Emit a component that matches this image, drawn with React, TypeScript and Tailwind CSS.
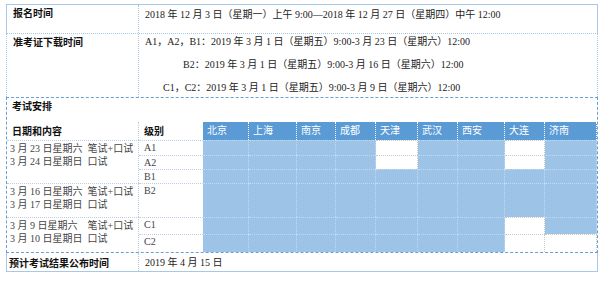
const cities = ['北京', '上海', '南京', '成都', '天津', '武汉', '西安', '大连', '济南'];

const levels = [
  { name: 'A1', row: 'row-start-2', white: [4, 7] },
  { name: 'A2', row: 'row-start-3', white: [4, 7] },
  { name: 'B1', row: 'row-start-4', white: [] as number[] },
  { name: 'B2', row: 'row-start-5', white: [] as number[] },
  { name: 'C1', row: 'row-start-6', white: [7] },
  { name: 'C2', row: 'row-start-7', white: [7, 8] },
];

const cityCols = [
  'col-start-3',
  'col-start-4',
  'col-start-5',
  'col-start-6',
  'col-start-7',
  'col-start-8',
  'col-start-9',
  'col-start-10',
  'col-start-11',
];

const dates = [
  { rows: 'row-start-2 row-span-3', lines: ['3 月 23 日星期六  笔试+口试', '3 月 24 日星期日  口试'] },
  { rows: 'row-start-5 row-span-1', lines: ['3 月 16 日星期六  笔试+口试', '3 月 17 日星期日  口试'] },
  { rows: 'row-start-6 row-span-2', lines: ['3 月 9 日星期六    笔试+口试', '3 月 10 日星期日  口试'] },
];

const heiti = { fontFamily: '"Noto Sans CJK SC", sans-serif' };

export default function App() {
  return (
    <div
      className="h-[282px] w-[606px] bg-white pl-[6px] pt-[4px] text-[10px] text-[#222]"
      style={{ fontFamily: '"Liberation Serif", "Noto Sans CJK SC", serif' }}
    >
      <div className="w-[592px]">
        {/* 报名时间 */}
        <div className="flex h-[29px] border-x border-t border-[#a9c8e8]">
          <div className="w-[132px] border-r border-dotted border-[#a9c8e8] pl-[6px] pt-[1px] font-bold leading-[13px] text-[#111]" style={heiti}>
            报名时间
          </div>
          <div className="flex-1 pl-[6px] pt-[3px] leading-[13px] whitespace-pre">
            2018 年 12 月 3 日（星期一）上午 9:00—2018 年 12 月 27 日（星期四）中午 12:00
          </div>
        </div>

        {/* 准考证下载时间 */}
        <div className="flex h-[64px] border-x border-t border-dotted border-[#a9c8e8]">
          <div className="w-[132px] border-r border-dotted border-[#a9c8e8] pl-[6px] pt-[1px] font-bold leading-[13px] text-[#111]" style={heiti}>
            准考证下载时间
          </div>
          <div className="flex flex-1 flex-col gap-[10px] pt-[1px] leading-[13px] whitespace-pre">
            <div className="pl-[6px]">A1，A2，B1：2019 年 3 月 1 日（星期五）9:00-3 月 23 日（星期六）12:00</div>
            <div className="pl-[44px]">B2：2019 年 3 月 1 日（星期五）9:00-3 月 16 日（星期六）12:00</div>
            <div className="pl-[24px]">C1，C2：2019 年 3 月 1 日（星期五）9:00-3 月 9 日（星期六）12:00</div>
          </div>
        </div>

        {/* 考试安排 */}
        <div className="border border-dashed border-[#6a9fd4]">
          <div className="h-[24px] pl-[5px] pt-[1px] font-bold leading-[13px] text-[#111]" style={heiti}>
            考试安排
          </div>
          <div className="-mr-px grid grid-cols-[132px_64px_46px_48px_39px_40px_42px_40px_47px_40px_52px] grid-rows-[18px_15px_14px_14px_34px_17px_18px]">
            <div className="col-start-1 row-start-1 border-r border-dotted border-[#b9cfe6] pl-[5px] pt-[3px] font-bold leading-[12px] text-[#111]" style={heiti}>
              日期和内容
            </div>
            <div className="col-start-2 row-start-1 pl-[5px] pt-[3px] font-bold leading-[12px] text-[#111]" style={heiti}>
              级别
            </div>
            {cities.map((c, i) => (
              <div
                key={c}
                className={`${cityCols[i]} row-start-1 border-r border-dotted border-white bg-[#5b9bd5] pl-[4px] pt-[2px] leading-[12px] text-white`}
                style={heiti}
              >
                {c}
              </div>
            ))}

            {dates.map((d) => (
              <div
                key={d.lines[0]}
                className={`col-start-1 ${d.rows} border-r border-t border-dotted border-[#b9cfe6] pl-[3px] pt-[1px] leading-[13px] whitespace-pre text-[#444]`}
              >
                {d.lines.map((l) => (
                  <div key={l}>{l}</div>
                ))}
              </div>
            ))}

            {levels.map((lv) => (
              <div
                key={lv.name}
                className={`col-start-2 ${lv.row} border-t border-dotted border-[#b9cfe6] pl-[5px] pt-[1px] leading-[12px] text-[#444]`}
              >
                {lv.name}
              </div>
            ))}

            {levels.flatMap((lv) =>
              cities.map((c, i) =>
                lv.white.includes(i) ? (
                  <div
                    key={lv.name + c}
                    className={`${cityCols[i]} ${lv.row} border-r border-t border-dotted border-[#c9c9c9] bg-white`}
                  />
                ) : (
                  <div
                    key={lv.name + c}
                    className={`${cityCols[i]} ${lv.row} border-r border-t border-dotted border-[#c3dbf2] bg-[#9dc3e6]`}
                  />
                ),
              ),
            )}
          </div>
        </div>

        {/* 预计考试结果公布时间 */}
        <div className="flex h-[19px] border-x border-b border-[#a9c8e8]">
          <div className="w-[132px] border-r border-dotted border-[#a9c8e8] pl-[2px] pt-[3px] font-bold leading-[13px] text-[#111]" style={heiti}>
            预计考试结果公布时间
          </div>
          <div className="flex-1 pl-[6px] pt-[3px] leading-[13px] whitespace-pre">2019 年 4 月 15 日</div>
        </div>
      </div>
    </div>
  );
}
